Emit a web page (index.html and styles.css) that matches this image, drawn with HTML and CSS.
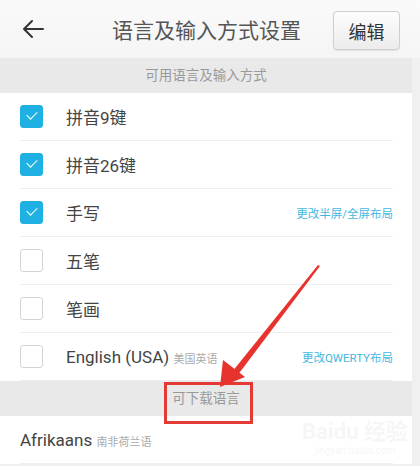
FILE: index.html
```html
<!DOCTYPE html>
<html lang="zh-CN">
<head>
    <meta charset="UTF-8">
    <meta name="viewport" content="width=device-width, initial-scale=1.0">
    <title>语言及输入方式设置</title>
    <link rel="stylesheet" href="styles.css">
</head>
<body>
    <div class="top-bar">
        <span class="back">
            <svg width="22" height="20" viewBox="0 0 22 20">
                <path d="M21 10H2M10 2L2 10l8 8" fill="none" stroke="#333" stroke-width="2" stroke-linecap="round" stroke-linejoin="round"/>
            </svg>
        </span>
        <h1 class="title">语言及输入方式设置</h1>
        <button class="edit-btn">编辑</button>
    </div>

    <div class="page">
        <div class="section-title">可用语言及输入方式</div>
        <div class="list">
            <div class="row">
                <span class="check on"></span>
                <span class="name">拼音9键</span>
            </div>
            <div class="row">
                <span class="check on"></span>
                <span class="name">拼音26键</span>
            </div>
            <div class="row">
                <span class="check on"></span>
                <span class="name">手写</span>
                <span class="link">更改半屏/全屏布局</span>
            </div>
            <div class="row">
                <span class="check"></span>
                <span class="name">五笔</span>
            </div>
            <div class="row">
                <span class="check"></span>
                <span class="name">笔画</span>
            </div>
            <div class="row">
                <span class="check"></span>
                <span class="name">English (USA) <small>美国英语</small></span>
                <span class="link">更改QWERTY布局</span>
            </div>
        </div>
        <div class="section-title">可下载语言</div>
        <div class="list">
            <div class="row lang">
                <span class="name">Afrikaans <small>南非荷兰语</small></span>
            </div>
        </div>
    </div>

    <!-- annotation drawn over the screenshot -->
    <div class="mark-box"></div>
    <svg class="mark-arrow" width="420" height="466" viewBox="0 0 420 466">
        <path d="M320 266 L318 265 L232 372 L237 376 Z" fill="#e8322e"/>
        <path d="M220 387 L223 360 L245 377 Z" fill="#e8322e"/>
    </svg>
    <div class="watermark">
        <div class="wm-logo">Bai<span>du</span> 经验</div>
        <div class="wm-url">jingyan.baidu.com</div>
    </div>
</body>
</html>
```

FILE: styles.css
```css
body {
    margin: 0;
    background: #f0f0f0;
    font-family: Roboto, "Noto Sans CJK SC", sans-serif;
    color: #444;
}
.top-bar {
    height: 58px;
    display: flex;
    align-items: center;
    padding: 0 20px 0 22px;
    background: linear-gradient(#fafafa, #f5f5f5);
    position: relative;
}
.back {
    display: flex;
    width: 22px;
    height: 20px;
}
.title {
    flex: 1;
    margin: 0;
    text-align: center;
    font-size: 21px;
    font-weight: normal;
    color: #555;
    padding-left: 36px;
}
.edit-btn {
    width: 67px;
    height: 39px;
    margin-top: 3px;
    border: 1px solid #cfcfcf;
    border-radius: 4px;
    background: linear-gradient(#fdfdfd, #ececec);
    box-shadow: 0 1px 1px rgba(0,0,0,0.08);
    font-family: "Noto Sans CJK SC", sans-serif;
    font-size: 18px;
    color: #333;
    padding: 0;
}
.page {
    margin-right: 8px;
}
.section-title {
    height: 35px;
    line-height: 35px;
    text-align: center;
    background: #e9e9e9;
    font-size: 13.5px;
    color: #999;
}
.list {
    background: #fff;
    padding-left: 2px;
}
.row {
    height: 47px;
    margin: 0 19px 0 18px;
    border-bottom: 1px solid #eeeeee;
    display: flex;
    align-items: center;
}
.check {
    width: 21px;
    height: 21px;
    border: 1px solid #d4d4d4;
    border-radius: 3px;
    margin-right: 23px;
    box-sizing: content-box;
    position: relative;
}
.check.on {
    background: #1fb1e3;
    border-color: #1fb1e3;
}
.check.on::after {
    content: "";
    position: absolute;
    left: 6px;
    top: 5px;
    width: 9px;
    height: 5px;
    border-left: 1.5px solid #fff;
    border-bottom: 1.5px solid #fff;
    transform: rotate(-45deg);
}
.name {
    flex: 1;
    font-size: 17px;
    color: #444;
}
.name small {
    font-size: 11px;
    color: #aaa;
}
.link {
    font-size: 11.5px;
    color: #45b8df;
}
.mark-box {
    position: absolute;
    left: 164px;
    top: 382px;
    width: 83px;
    height: 36px;
    border: 3px solid #e33a36;
}
.mark-arrow {
    position: absolute;
    left: 0;
    top: 0;
    pointer-events: none;
}
.watermark {
    position: absolute;
    left: 302px;
    top: 420px;
    color: rgba(200,200,200,0.18);
    text-align: center;
}
.wm-logo {
    font-size: 22px;
    font-weight: bold;
    line-height: 24px;
}
.wm-url {
    font-size: 10px;
    line-height: 14px;
}
```
